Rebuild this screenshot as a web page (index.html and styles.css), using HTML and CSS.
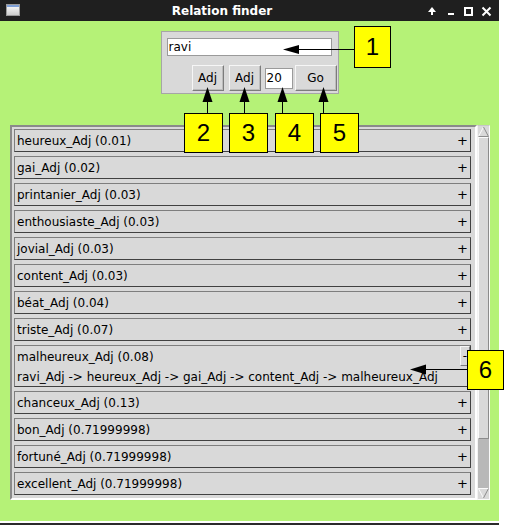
FILE: index.html
```html
<!DOCTYPE html>
<html>
<head>
<meta charset="utf-8">
<title>Relation finder</title>
<link rel="stylesheet" href="styles.css">
</head>
<body>
<div class="screen">
  <div class="window">
    <div class="titlebar">
      <svg class="app-icon" width="14" height="12" viewBox="0 0 14 12">
        <defs>
          <linearGradient id="ig" x1="0" y1="0" x2="0" y2="1">
            <stop offset="0" stop-color="#ffffff"/>
            <stop offset="1" stop-color="#c9c9c9"/>
          </linearGradient>
        </defs>
        <rect x="0.5" y="0.5" width="13" height="11" fill="url(#ig)" stroke="#9a9a9a"/>
        <rect x="1" y="1" width="12" height="2" fill="#7e9fd6"/>
      </svg>
      <div class="title">Relation finder</div>
      <svg class="controls" width="64" height="21" viewBox="0 0 64 21">
        <polygon points="0,12 4,7 8,12" fill="#fff"/>
        <rect x="3" y="10" width="2" height="5" fill="#fff"/>
        <rect x="20" y="13" width="6" height="2" fill="#fff"/>
        <rect x="37" y="8" width="7" height="7" fill="none" stroke="#fff" stroke-width="2"/>
        <path d="M54.5 7.5 L62.5 15.5 M62.5 7.5 L54.5 15.5" stroke="#fff" stroke-width="2"/>
      </svg>
    </div>
    <div class="client">
      <div class="query">
        <div class="entry word">ravi</div>
        <div class="query-row">
          <div class="btn adj1">Adj</div>
          <div class="btn adj2">Adj</div>
          <div class="entry num">20</div>
          <div class="btn go">Go</div>
        </div>
      </div>
      <div class="results">
        <div class="list">
          <div class="row"><span>heureux_Adj (0.01)</span><span class="toggle">+</span></div>
          <div class="row"><span>gai_Adj (0.02)</span><span class="toggle">+</span></div>
          <div class="row"><span>printanier_Adj (0.03)</span><span class="toggle">+</span></div>
          <div class="row"><span>enthousiaste_Adj (0.03)</span><span class="toggle">+</span></div>
          <div class="row"><span>jovial_Adj (0.03)</span><span class="toggle">+</span></div>
          <div class="row"><span>content_Adj (0.03)</span><span class="toggle">+</span></div>
          <div class="row"><span>béat_Adj (0.04)</span><span class="toggle">+</span></div>
          <div class="row"><span>triste_Adj (0.07)</span><span class="toggle">+</span></div>
          <div class="row open">
            <div class="row-head"><span>malheureux_Adj (0.08)</span><span class="toggle-btn">-</span></div>
            <div class="path">ravi_Adj -&gt; heureux_Adj -&gt; gai_Adj -&gt; content_Adj -&gt; malheureux_Adj</div>
          </div>
          <div class="row"><span>chanceux_Adj (0.13)</span><span class="toggle">+</span></div>
          <div class="row"><span>bon_Adj (0.71999998)</span><span class="toggle">+</span></div>
          <div class="row"><span>fortuné_Adj (0.71999998)</span><span class="toggle">+</span></div>
          <div class="row"><span>excellent_Adj (0.71999998)</span><span class="toggle">+</span></div>
        </div>
        <div class="scrollbar">
          <svg class="sb-arrow" width="11" height="11" viewBox="0 0 11 11">
            <polygon points="5.5,1 0.5,10.5 10.5,10.5" fill="#d9d9d9"/>
            <path d="M0.5 10.5 L5.5 1" stroke="#fafafa" fill="none"/>
            <path d="M5.5 1 L10.5 10.5 L0.5 10.5" stroke="#8c8c8c" fill="none"/>
          </svg>
          <div class="sb-thumb"></div>
          <div class="sb-trough"></div>
          <svg class="sb-arrow" width="11" height="11" viewBox="0 0 11 11">
            <polygon points="0.5,0.5 10.5,0.5 5.5,10" fill="#d9d9d9"/>
            <path d="M5.5 10 L0.5 0.5 L10.5 0.5" stroke="#fafafa" fill="none"/>
            <path d="M10.5 0.5 L5.5 10" stroke="#8c8c8c" fill="none"/>
          </svg>
        </div>
      </div>
    </div>
  </div>
  <div class="bottom-edge"></div>

  <svg class="arrows" width="505" height="525" viewBox="0 0 505 525">
    <g stroke="#000" stroke-width="1" fill="none">
      <path d="M354 49.5 H298"/>
      <path d="M207.5 113 V101"/>
      <path d="M244.5 113 V101"/>
      <path d="M282.5 113 V101"/>
      <path d="M323.5 113 V101"/>
      <path d="M467 369.5 H425"/>
    </g>
    <g fill="#000">
      <polygon points="283,49.5 299,45 299,54"/>
      <polygon points="207.5,87 202.5,102 212.5,102"/>
      <polygon points="244.5,87 239.5,102 249.5,102"/>
      <polygon points="282.5,87 277.5,102 287.5,102"/>
      <polygon points="323.5,87 318.5,102 328.5,102"/>
      <polygon points="410,369.5 426,364.5 426,374.5"/>
    </g>
  </svg>
  <div class="callout c1">1</div>
  <div class="callout c2">2</div>
  <div class="callout c3">3</div>
  <div class="callout c4">4</div>
  <div class="callout c5">5</div>
  <div class="callout c6">6</div>
</div>
</body>
</html>
```

FILE: styles.css
```css
html, body {
  margin: 0;
  padding: 0;
  background: #ffffff;
}

body {
  font-family: "DejaVu Sans", "Noto Sans", sans-serif;
  font-size: 12px;
  color: #000;
}

.screen {
  position: relative;
  width: 505px;
  height: 525px;
  overflow: hidden;
}

.window {
  width: 499px;
  height: 521px;
  background: #b5f277;
  display: flex;
  flex-direction: column;
}

.titlebar {
  height: 21px;
  flex: none;
  background: #1f1f1f;
  display: flex;
  align-items: center;
  padding: 0 7px 0 6px;
}

.app-icon {
  display: block;
  flex: none;
  margin-top: -2px;
}

.title {
  flex: 1;
  text-align: center;
  color: #ffffff;
  font-weight: bold;
  font-size: 12px;
  line-height: 20px;
  padding: 1px 4px 0 0;
}

.controls {
  display: block;
  flex: none;
}

.client {
  flex: 1;
  display: flex;
  flex-direction: column;
  align-items: center;
  padding-top: 10px;
}

.query {
  width: 178px;
  height: 63px;
  box-sizing: border-box;
  background: #d9d9d9;
  border: 1px solid #a6a6a6;
  padding: 6px 1px 0 5px;
}

.entry {
  background: #ffffff;
  border: 1px solid #9a9a9a;
  box-sizing: border-box;
  padding-left: 1px;
  white-space: nowrap;
}

.entry.word {
  width: 165px;
  height: 18px;
  line-height: 16px;
}

.query-row {
  display: flex;
  justify-content: flex-end;
  align-items: center;
  margin-top: 9px;
}

.btn {
  height: 26px;
  box-sizing: border-box;
  background: #d9d9d9;
  border: 1px solid;
  border-color: #f6f6f6 #7c7c7c #7c7c7c #f6f6f6;
  box-shadow: inset -1px -1px 0 #bcbcbc;
  text-align: center;
  line-height: 24px;
}

.btn.adj1 { width: 32px; }
.btn.adj2 { width: 32px; margin-left: 5px; }
.btn.go { width: 42px; margin-left: 2px; }

.entry.num {
  width: 28px;
  height: 21px;
  line-height: 19px;
  margin-left: 4px;
}

.results {
  align-self: flex-start;
  margin: 31px 0 0 10px;
  display: flex;
  height: 375px;
}

.list {
  width: 467px;
  height: 375px;
  box-sizing: border-box;
  border: 2px solid;
  border-color: #8a8a8a #ffffff #ffffff #8a8a8a;
  background: #d9d9d9;
  padding: 2px 4px 2px 2px;
  display: flex;
  flex-direction: column;
  gap: 4px;
  overflow: hidden;
}

.row {
  flex: none;
  height: 23px;
  box-sizing: border-box;
  border: 1px solid;
  border-color: #7e7e7e #414141 #414141 #7e7e7e;
  padding: 1px 2px 0;
  display: flex;
  justify-content: space-between;
  align-items: center;
  line-height: 20px;
  white-space: nowrap;
}

.toggle {
  font-size: 13px;
}

.row.open {
  height: 42px;
  display: block;
  padding: 0 0 0 2px;
}

.row-head {
  height: 20px;
  display: flex;
  justify-content: space-between;
  align-items: center;
  line-height: 20px;
}

.row-head > span:first-child {
  padding-top: 1px;
}

.toggle-btn {
  width: 10px;
  height: 20px;
  box-sizing: border-box;
  border: 1px solid;
  border-color: #f6f6f6 #7c7c7c #7c7c7c #f6f6f6;
  text-align: center;
  line-height: 18px;
}

.path {
  height: 20px;
  line-height: 20px;
  padding-top: 1px;
  box-sizing: border-box;
}

.scrollbar {
  width: 13px;
  height: 375px;
  box-sizing: border-box;
  background: #b8b8b8;
  border-left: 1px solid #f2f2f2;
  border-right: 1px solid #fafafa;
  border-top: 1px solid #c6c6c6;
  border-bottom: 1px solid #fafafa;
  display: flex;
  flex-direction: column;
}

.sb-arrow {
  display: block;
  flex: none;
  background: #d9d9d9;
}

.sb-thumb {
  flex: none;
  height: 302px;
  box-sizing: border-box;
  background: #d9d9d9;
  border: 1px solid;
  border-color: #fafafa #8c8c8c #8c8c8c #fafafa;
}

.sb-trough {
  flex: 1;
}

.bottom-edge {
  width: 499px;
  height: 2px;
  margin-top: 2px;
  background: #2b2b2b;
}

.arrows {
  position: absolute;
  left: 0;
  top: 0;
  pointer-events: none;
}

.callout {
  position: absolute;
  box-sizing: border-box;
  background: #ffff00;
  border: 1px solid #000;
  font-family: "Liberation Sans", Arial, sans-serif;
  font-size: 24px;
  display: flex;
  align-items: center;
  justify-content: center;
  color: #000;
}

.c1 { left: 354px; top: 26px; width: 37px; height: 42px; }
.c2 { left: 184px; top: 113px; width: 39px; height: 40px; }
.c3 { left: 229px; top: 113px; width: 39px; height: 40px; }
.c4 { left: 275px; top: 113px; width: 39px; height: 40px; }
.c5 { left: 320px; top: 113px; width: 39px; height: 40px; }
.c6 { left: 467px; top: 350px; width: 37px; height: 40px; }
```
